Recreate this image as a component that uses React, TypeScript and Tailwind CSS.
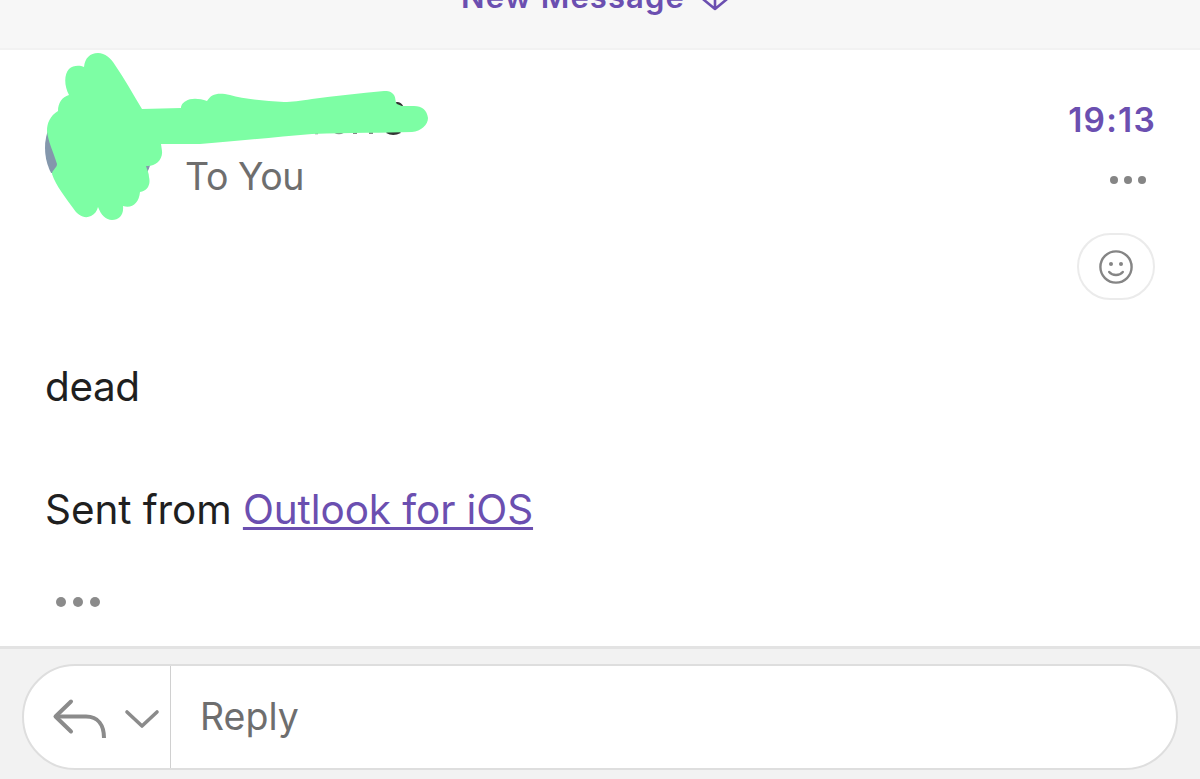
interface DotsProps {
  className: string;
  dotClassName: string;
}

function Dots({ className, dotClassName }: DotsProps) {
  return (
    <span className={`flex ${className}`}>
      <span className={`rounded-full ${dotClassName}`} />
      <span className={`rounded-full ${dotClassName}`} />
      <span className={`rounded-full ${dotClassName}`} />
    </span>
  );
}

function ArrowDown() {
  return (
    <svg className="h-[30px] w-[30px]" viewBox="0 0 30 30" fill="none" stroke="currentColor" strokeWidth="2.6" strokeLinecap="round" strokeLinejoin="round">
      <path d="M15 3V26M3.5 16.5L15 26L26.5 16.5" />
    </svg>
  );
}

function Smiley() {
  return (
    <svg className="h-[36px] w-[36px]" viewBox="0 0 36 36" fill="none" stroke="#858585" strokeWidth="2.4" strokeLinecap="round">
      <circle cx="18" cy="18" r="15.6" />
      <path d="M11.2 23C14.5 27 21.5 27 24.8 23" />
      <circle cx="13" cy="15" r="2" fill="#858585" stroke="none" />
      <circle cx="23" cy="15" r="2" fill="#858585" stroke="none" />
    </svg>
  );
}

function ReplyArrow() {
  return (
    <svg className="h-[42px] w-[56px]" viewBox="0 0 56 42" fill="none" stroke="#8b8b8b" strokeWidth="4" strokeLinecap="round" strokeLinejoin="round">
      <path d="M19 3.5L3.5 18.5L19 33.5" />
      <path d="M4 18.5H34C46 18.5 52 27 52 40" strokeLinecap="butt" />
    </svg>
  );
}

function Chevron() {
  return (
    <svg className="h-[22px] w-[36px]" viewBox="0 0 36 22" fill="none" stroke="#8b8b8b" strokeWidth="3.6" strokeLinecap="round" strokeLinejoin="round">
      <path d="M3 4L18 18L33 4" />
    </svg>
  );
}

// marker strokes that hide the avatar and the sender name
function Scribble() {
  return (
    <svg className="absolute top-0 left-0 h-[190px] w-[440px]" viewBox="0 50 440 190">
      <g fill="none" stroke="#333">
        <path d="M394 104.5Q399 102 402 107" strokeWidth="3" />
        <path d="M387 131.5Q393 135 400 131.5" strokeWidth="3.5" />
        <path d="M335 132Q339 134.5 343 132M315 133.2H318M353 132.8H357M369 132.8H373" strokeWidth="2.2" opacity="0.6" />
      </g>
      <path
        fill="#7dfea4"
        d="M98 53C90 53 85 58 84 67C80 65 73 65 69 69C64 74 64 86 69 95C62 97 58 103 58 111C50 116 47 123 47 131C48 141 53 151 57 164C57 168 52 170 52 174C56 186 66 198 73 208C78 216 85 219 91 216C95 214 97 211 98 207C101 215 106 220 112 220C119 220 124 215 123 206C132 209 139 203 140 192C147 191 151 185 149 177C149 173 147 170 146 166C155 167 163 160 162 151L161 144H200C240 141 275 137 312 134C350 132.5 385 133 412 132C421 131 428 125 428 118C427 110 422 106 414 106H402L397 104C395 102 396 98 394 95C391 91 388 91 384 91C360 93 335 96 312 99C300 101 292 102 284 102C265 101 243 99 230 95C218 92 211 94 207 101C199 98 190 98 186 101C182 103 181 106 181 108L142 109C133 94 124 78 115 65C111 58 105 53 98 53Z"
      />
    </svg>
  );
}

function MessageHeader() {
  return (
    <div className="relative flex h-[260px] justify-between">
      <div className="flex pl-[45px]">
        <div className="mt-[44px] h-[108px] w-[108px] rounded-full bg-[#8497ac] [clip-path:inset(0_0_29px_0)]" />
        <span className="mt-[101.5px] ml-[32px] text-[37.5px] leading-[50px] tracking-[-0.4px] text-[#6e6e6e]">To You</span>
      </div>
      <div className="flex flex-col items-end pr-[45px]">
        <time className="mt-[50px] mr-[-1px] text-[33.5px] leading-[41px] font-semibold tracking-[1.2px] text-[#6b4fb0]">19:13</time>
        <Dots className="mt-[35px] mr-[9px] gap-[6px]" dotClassName="h-[8px] w-[8px] bg-[#858585]" />
        <button className="mt-[49px] flex h-[67px] w-[78px] items-center justify-center rounded-[34px] border-2 border-[#ebebeb]">
          <Smiley />
        </button>
      </div>
      <Scribble />
    </div>
  );
}

export default function App() {
  return (
    <div className="flex h-[779px] w-[1200px] flex-col overflow-hidden bg-white font-['Inter',sans-serif]">
      <header className="flex h-[50px] justify-center overflow-hidden border-b-2 border-[#f2f2f2] bg-[#f7f7f7] text-[#6b4fb0]">
        <div className="-mt-[23px] mr-[9px] flex h-[40px] items-center gap-[15px]">
          <span className="text-[31px] leading-[40px] font-semibold tracking-[1.1px]">New Message</span>
          <span className="mt-[2px]">
            <ArrowDown />
          </span>
        </div>
      </header>
      <main className="flex h-[596px] flex-col">
        <MessageHeader />
        <div className="flex flex-col pl-[45px] text-[40.5px] tracking-[-0.1px] text-[#1f1f1f]">
          <p className="mt-[47px] leading-[60px] tracking-[-0.4px]">dead</p>
          <p className="mt-[63px] leading-[60px]">
            Sent from{" "}
            <a href="#" className="text-[#6b4fb0] underline decoration-[3px] underline-offset-[3px]">
              Outlook for iOS
            </a>
          </p>
          <Dots className="mt-[57px] ml-[11px] gap-[7px]" dotClassName="h-[10px] w-[10px] bg-[#8b8b8b]" />
        </div>
      </main>
      <footer className="flex h-[133px] border-t-[3px] border-[#e3e3e3] bg-[#f2f2f2] px-[22px] pt-[15px]">
        <div className="flex h-[106px] w-full rounded-full border-2 border-[#dedede] bg-white">
          <button className="flex w-[147px] items-center border-r border-[#d0d0d0] pt-[4px] pl-[28px]">
            <ReplyArrow />
            <span className="ml-[16px]">
              <Chevron />
            </span>
          </button>
          <span className="ml-[29px] text-[37.5px] leading-[102px] text-[#6e6e6e]">Reply</span>
        </div>
      </footer>
    </div>
  );
}
